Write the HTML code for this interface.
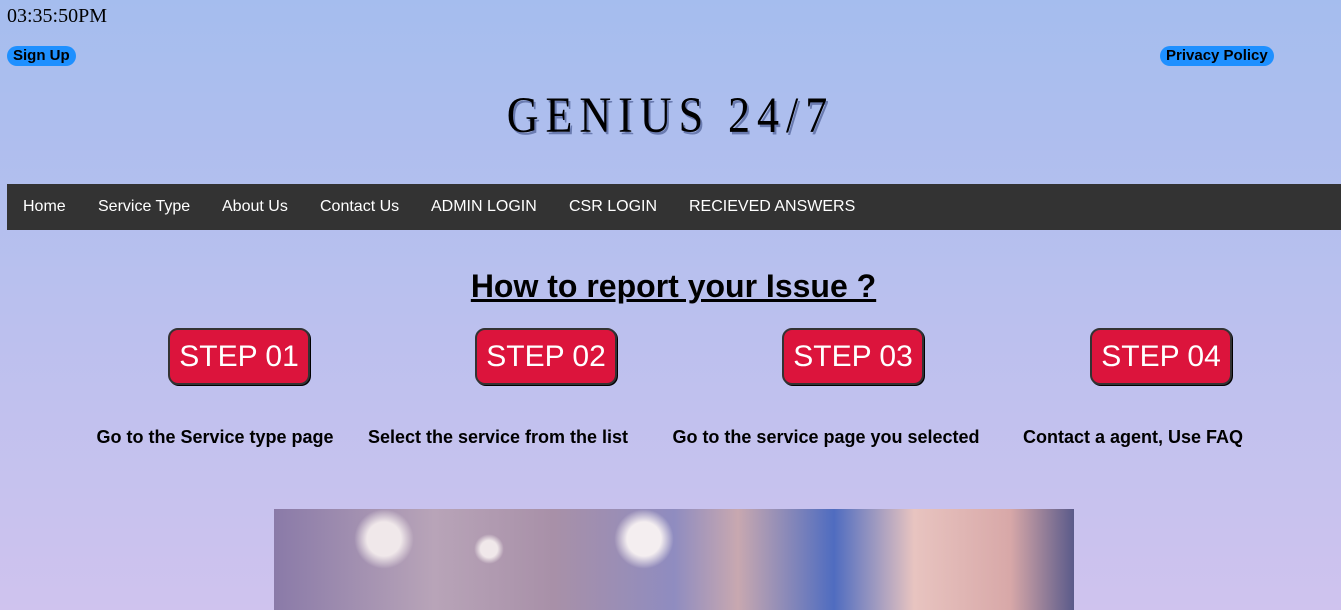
<!DOCTYPE html>
<html><head><style>
body{margin:0;width:1341px;height:610px;overflow:hidden;background:linear-gradient(#a5bdee,#cfc3ee 610px);font-family:"Liberation Sans",Arial,sans-serif;position:relative}
.a{position:absolute}
.pill{background:#1e90ff;border-radius:10px;font-weight:bold;font-size:15px;padding:1px 6px;line-height:18px;color:#000}
.nav{left:7px;top:184px;width:1334px;height:46px;background:#333}
.nav span{position:absolute;top:14px;color:#fff;font-size:16px}
.step{width:138px;height:53px;background:#dc143c;border:2px solid #333;border-radius:10px;color:#fff;font-size:30px;text-align:center;line-height:54px;box-shadow:1px 1px 0 #000}
.cap{font-weight:bold;font-size:18px;top:427px;white-space:nowrap;transform:translateX(-50%)}
</style></head><body>
<div class="a" style="left:7px;top:5px;font-family:'Liberation Serif',serif;font-size:20px">03:35:50PM</div>
<div class="a pill" style="left:7px;top:46px">Sign Up</div>
<div class="a pill" style="left:1160px;top:46px">Privacy Policy</div>
<div class="a" style="left:0;width:1341px;top:90px;text-align:center;font-family:'Liberation Serif',serif;font-size:44px;letter-spacing:7px;transform:scaleY(1.15);text-shadow:2px 2px 0 #6a7bb0;color:#000">GENIUS 24/7</div>
<div class="a nav">
<span style="left:16px">Home</span><span style="left:91px">Service Type</span><span style="left:215px">About Us</span><span style="left:313px">Contact Us</span><span style="left:424px">ADMIN LOGIN</span><span style="left:562px">CSR LOGIN</span><span style="left:682px">RECIEVED ANSWERS</span>
</div>
<div class="a" style="left:0;width:1347px;top:268px;text-align:center;font-weight:bold;font-size:32px;text-decoration:underline">How to report your Issue ?</div>
<div class="a step" style="left:168px;top:328px">STEP 01</div>
<div class="a step" style="left:475px;top:328px">STEP 02</div>
<div class="a step" style="left:782px;top:328px">STEP 03</div>
<div class="a step" style="left:1090px;top:328px">STEP 04</div>
<div class="a cap" style="left:215px">Go to the Service type page</div>
<div class="a cap" style="left:498px">Select the service from the list</div>
<div class="a cap" style="left:826px">Go to the service page you selected</div>
<div class="a cap" style="left:1133px">Contact a agent, Use FAQ</div>
<div class="a" style="left:274px;top:509px;width:800px;height:101px;background:linear-gradient(90deg,#8a7aa8 0%,#b8a4b8 20%,#a890a8 35%,#8f8cc0 50%,#c8a8b0 58%,#4f6cc0 70%,#e8c4c0 80%,#d8a8a8 92%,#5a5a8a 100%);overflow:hidden">
<div class="a" style="left:80px;top:0;width:60px;height:60px;border-radius:50%;background:radial-gradient(#f0e8ea 40%,transparent 70%)"></div>
<div class="a" style="left:340px;top:0;width:60px;height:60px;border-radius:50%;background:radial-gradient(#f4eef0 40%,transparent 70%)"></div>
<div class="a" style="left:200px;top:25px;width:30px;height:30px;border-radius:50%;background:radial-gradient(#f0e8ea 40%,transparent 70%)"></div>
</div>
</body></html>
